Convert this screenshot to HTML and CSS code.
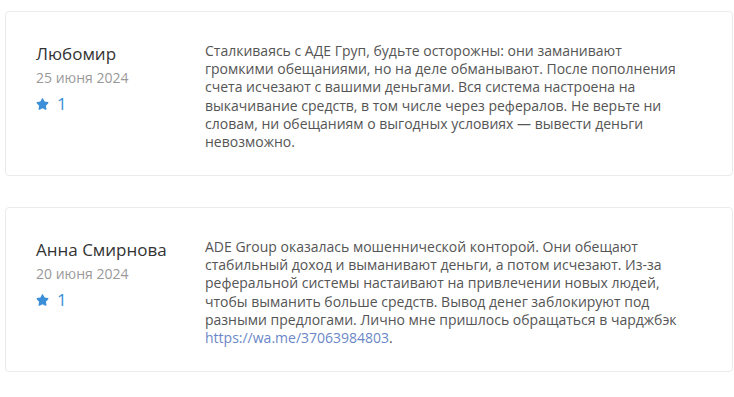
FILE: index.html
```html
<!DOCTYPE html>
<html lang="ru">
<head>
    <meta charset="UTF-8">
    <meta name="viewport" content="width=device-width, initial-scale=1.0">
    <title>Отзывы</title>
    <link rel="stylesheet" href="styles.css">
</head>
<body>
    <div class="reviews">
        <div class="review">
            <div class="review-author">
                <div class="author-name">Любомир</div>
                <div class="review-date">25 июня 2024</div>
                <div class="review-rating">
                    <svg class="star" viewBox="0 0 576 512"><path d="M316.9 18C311.6 7 300.4 0 288.1 0s-23.4 7-28.8 18L195 150.3 51.4 171.5c-12 1.8-22 10.2-25.700 21.7s-.7 24.2 7.9 32.7L137.8 329 113.2 474.7c-2 12 3 24.2 12.9 31.3s23 8 33.8 2.3l128.3-68.5 128.3 68.5c10.8 5.7 23.9 4.9 33.8-2.3s14.9-19.3 12.9-31.3L438.5 329 542.7 225.9c8.6-8.5 11.7-21.2 7.9-32.7s-13.7-19.9-25.7-21.7L381.2 150.3 316.9 18z"/></svg>
                    <span>1</span>
                </div>
            </div>
            <p class="review-text">Сталкиваясь с АДЕ Груп, будьте осторожны: они заманивают громкими обещаниями, но на деле обманывают. После пополнения счета исчезают с вашими деньгами. Вся система настроена на выкачивание средств, в том числе через рефералов. Не верьте ни словам, ни обещаниям о выгодных условиях — вывести деньги невозможно.</p>
        </div>
        <div class="review">
            <div class="review-author">
                <div class="author-name">Анна Смирнова</div>
                <div class="review-date">20 июня 2024</div>
                <div class="review-rating">
                    <svg class="star" viewBox="0 0 576 512"><path d="M316.9 18C311.6 7 300.4 0 288.1 0s-23.4 7-28.8 18L195 150.3 51.4 171.5c-12 1.8-22 10.2-25.7 21.7s-.7 24.2 7.9 32.7L137.8 329 113.2 474.7c-2 12 3 24.2 12.9 31.3s23 8 33.8 2.3l128.3-68.5 128.3 68.5c10.8 5.7 23.9 4.9 33.8-2.3s14.9-19.3 12.9-31.3L438.5 329 542.7 225.9c8.6-8.5 11.7-21.2 7.9-32.7s-13.7-19.9-25.7-21.7L381.2 150.3 316.9 18z"/></svg>
                    <span>1</span>
                </div>
            </div>
            <p class="review-text">ADE Group оказалась мошеннической конторой. Они обещают стабильный доход и выманивают деньги, а потом исчезают. Из-за реферальной системы настаивают на привлечении новых людей, чтобы выманить больше средств. Вывод денег заблокируют под разными предлогами. Лично мне пришлось обращаться в чарджбэк <a href="#">https://wa.me/37063984803</a>.</p>
        </div>
    </div>
</body>
</html>
```

FILE: styles.css
```css
body {
    margin: 0;
    padding: 11px 1px 0 5px;
    font-family: "Open Sans", Arial, sans-serif;
    background-color: #fff;
    color: #555;
}
.reviews {
    display: flex;
    flex-direction: column;
    gap: 31px;
}
.review {
    display: flex;
    height: 165px;
    box-sizing: border-box;
    padding: 30px 30px;
    border: 1px solid #ebebeb;
    border-radius: 4px;
    background-color: #fff;
}
.review-author {
    width: 169px;
    flex-shrink: 0;
}
.author-name {
    font-size: 17px;
    line-height: 24px;
    color: #333;
    margin-bottom: 3px;
}
.review-date {
    font-size: 14px;
    line-height: 1.3;
    color: #999;
}
.review-rating {
    display: flex;
    align-items: center;
    gap: 8px;
    margin-top: 6px;
    font-size: 17px;
    line-height: 1.3;
    color: #3b8fd8;
}
.star {
    width: 13px;
    height: 12px;
    fill: #3b8fd8;
}
.review-text {
    margin: 0;
    width: 475px;
    font-size: 14px;
    line-height: 1.3;
    color: #555;
}
.review-text a {
    color: #6b87c7;
    text-decoration: none;
}
```
